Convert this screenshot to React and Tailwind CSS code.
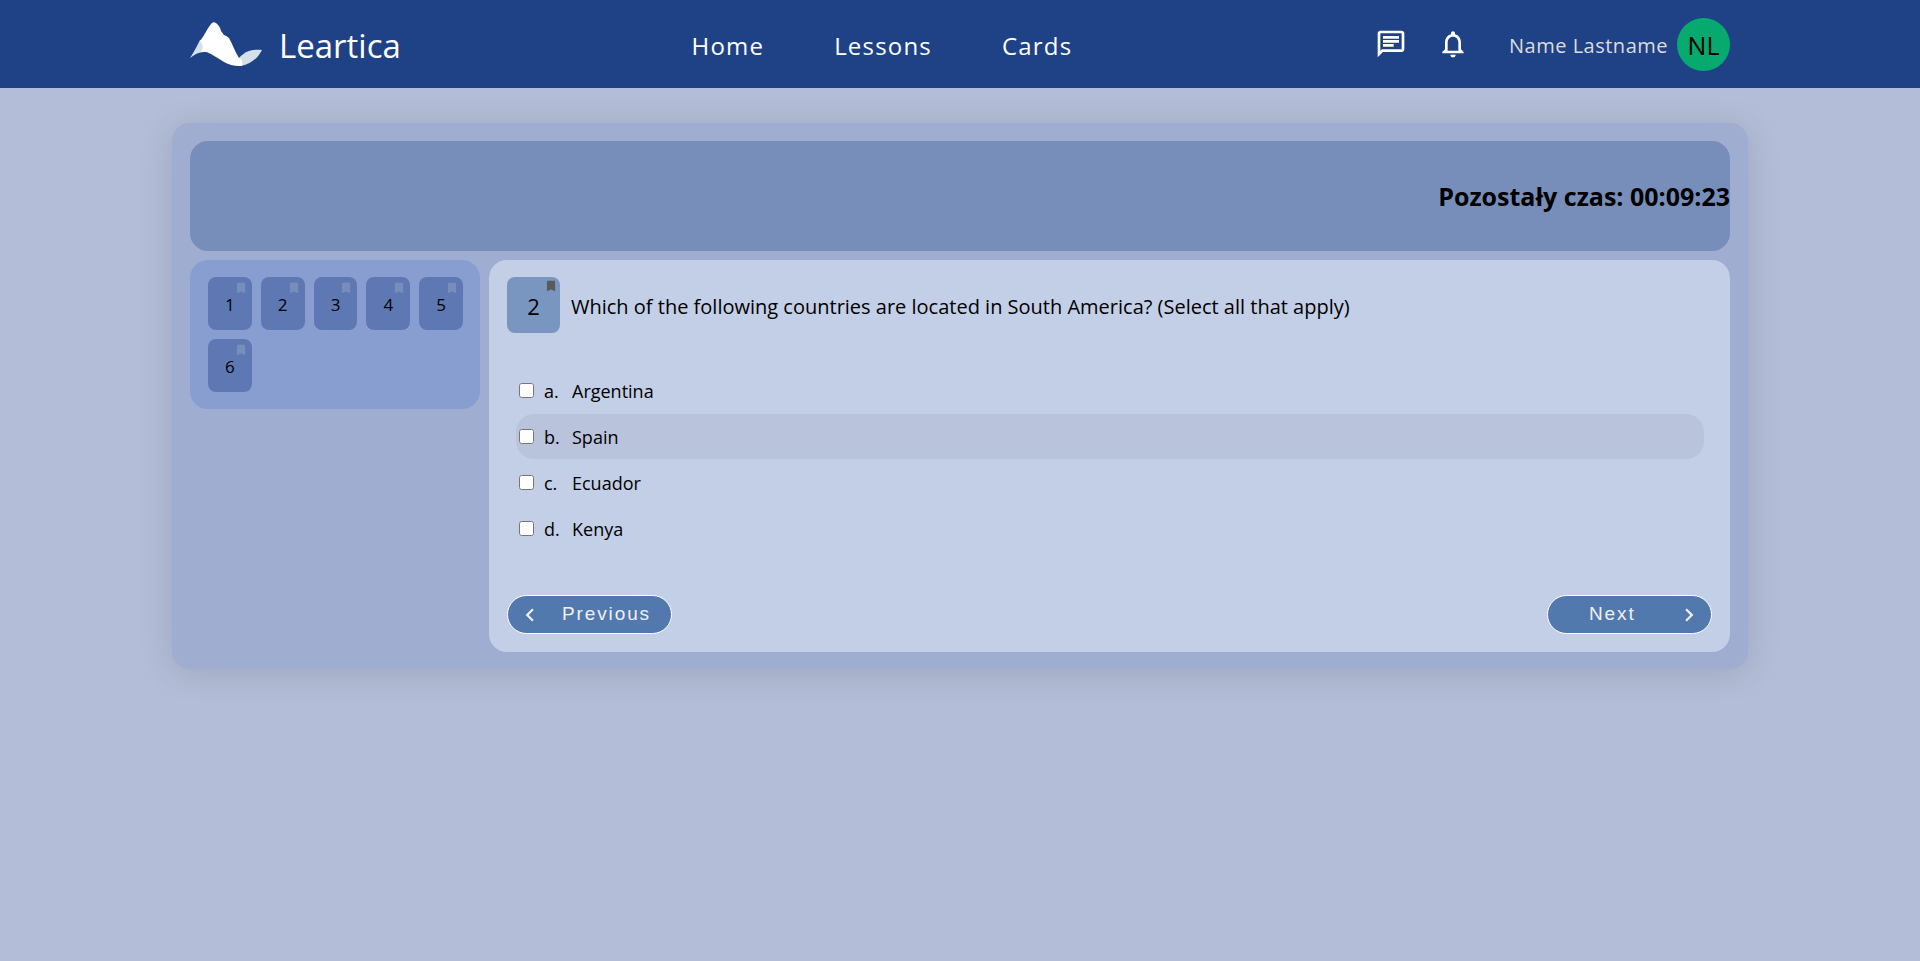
import {
  MdBookmark,
  MdChevronLeft,
  MdChevronRight,
  MdOutlineChat,
  MdNotificationsNone,
} from "react-icons/md";

const questionNumbers = [1, 2, 3, 4, 5, 6];

const answers = [
  { letter: "a.", text: "Argentina" },
  { letter: "b.", text: "Spain", active: true },
  { letter: "c.", text: "Ecuador" },
  { letter: "d.", text: "Kenya" },
];

const links = ["Home", "Lessons", "Cards"];

function Logo() {
  return (
    <svg className="h-[45px] w-[73px]" viewBox="0 0 73 45" aria-hidden="true">
      <path d="M0 36C4 30 7 24 10 18L15 20L14 30C9 30 5 32 0 36Z" fill="#d5e1ea" />
      <path d="M48 37C54 30 61 27 72 28C68 36 61 42 51 44Z" fill="#d5e1ea" />
      <path
        d="M10 19C14 14 17 7 21 2Q23 -1 26 1Q30 4 31 9L34 13Q37 14 39 16C43 23 45 30 49 36C52 37 53 39 52 44C38 45 32 38 21 32Q16 29 11 30Q15 24 10 19Z"
        fill="#fff"
      />
    </svg>
  );
}

function Header() {
  return (
    <header className="bg-[#1f4287] text-white">
      <div className="mx-auto flex h-[88px] max-w-[1540px] items-center justify-between">
        <a href="#" className="flex items-center gap-4 text-[33px]">
          <Logo />
          <span className="pt-1">Leartica</span>
        </a>
        <nav className="flex gap-[70px] pt-1 pr-3 text-2xl tracking-wider">
          {links.map((link) => (
            <a key={link} href="#">
              {link}
            </a>
          ))}
        </nav>
        <div className="flex items-center">
          <button type="button" aria-label="Messages" className="mr-[30px]">
            <MdOutlineChat className="size-8" />
          </button>
          <button type="button" aria-label="Notifications" className="mr-10">
            <MdNotificationsNone className="size-8" />
          </button>
          <a href="#" className="flex items-center gap-[9px]">
            <span className="pt-1 text-xl tracking-wide text-[#dcdcdc]">Name Lastname</span>
            <span className="flex size-[53px] items-center justify-center rounded-full bg-[#07aa6e] pt-1 text-[25px] text-black">
              NL
            </span>
          </a>
        </div>
      </div>
    </header>
  );
}

function QuestionList() {
  return (
    <nav
      aria-label="Questions"
      className="grid w-[290px] shrink-0 grid-cols-5 gap-[9px] rounded-[18px] bg-[#889ed0] py-[17px] pr-[17px] pl-[18px]"
    >
      {questionNumbers.map((number) => (
        <button
          key={number}
          type="button"
          className="relative h-[53px] rounded-lg bg-[#5e78b4] pt-[2px] text-[17px]"
        >
          {number}
          <MdBookmark className="absolute top-1 right-1 size-3.5 text-[#778eba]" />
        </button>
      ))}
    </nav>
  );
}

function Question() {
  return (
    <section className="flex-1 rounded-[18px] bg-[#c3cee7] px-[18px] pt-[17px] pb-[18px]">
      <div className="flex items-center gap-[11px]">
        <div className="relative flex h-14 w-[53px] items-center justify-center rounded-lg bg-[#7996c0] pt-[2px] text-[22px]">
          2
          <MdBookmark className="absolute top-[2px] right-[2px] size-3.5 text-[#5a5a5a]" />
        </div>
        <h1 className="pt-1 text-xl">
          Which of the following countries are located in South America? (Select all that apply)
        </h1>
      </div>
      <ul className="mt-[35px] mr-2 ml-[9px] flex flex-col gap-px">
        {answers.map(({ letter, text, active }) => (
          <li key={letter}>
            <label
              className={`flex h-[45px] items-center rounded-[18px] pl-[3px] text-[18px] ${
                active ? "bg-[#b9c3dc]" : ""
              }`}
            >
              <input type="checkbox" className="mr-[10px] size-[15px]" />
              <span className="w-7 pt-[2px]">{letter}</span>
              <span className="pt-[2px]">{text}</span>
            </label>
          </li>
        ))}
      </ul>
      <div className="mt-11 flex justify-between font-['Liberation_Sans',Arial,sans-serif] text-[19px] tracking-widest text-[#f0f0f0]">
        <button
          type="button"
          className="flex h-[39px] w-[165px] items-center justify-between rounded-full border border-white bg-[#5279ad] pr-5 pl-[9px]"
        >
          <MdChevronLeft className="size-[26px]" />
          Previous
        </button>
        <button
          type="button"
          className="flex h-[39px] w-[165px] items-center justify-between rounded-full border border-white bg-[#5279ad] pr-[9px] pl-[41px]"
        >
          Next
          <MdChevronRight className="size-[26px]" />
        </button>
      </div>
    </section>
  );
}

export default function App() {
  return (
    <div className="min-h-screen bg-[#b3bdd7] pb-9 font-['Open_Sans','Noto_Sans',sans-serif] text-black">
      <Header />
      <main className="mx-auto mt-[35px] max-w-[1576px] rounded-[18px] bg-[#9fadd1] px-[18px] pt-[18px] pb-[17px] shadow-[0_4px_35px_rgba(0,0,0,0.12)]">
        <div className="flex h-[110px] items-center justify-end rounded-[18px] bg-[#778eba]">
          <p className="pt-[2px] text-[25px] font-bold">Pozostały czas: 00:09:23</p>
        </div>
        <div className="mt-[9px] flex items-start gap-[9px]">
          <QuestionList />
          <Question />
        </div>
      </main>
    </div>
  );
}
